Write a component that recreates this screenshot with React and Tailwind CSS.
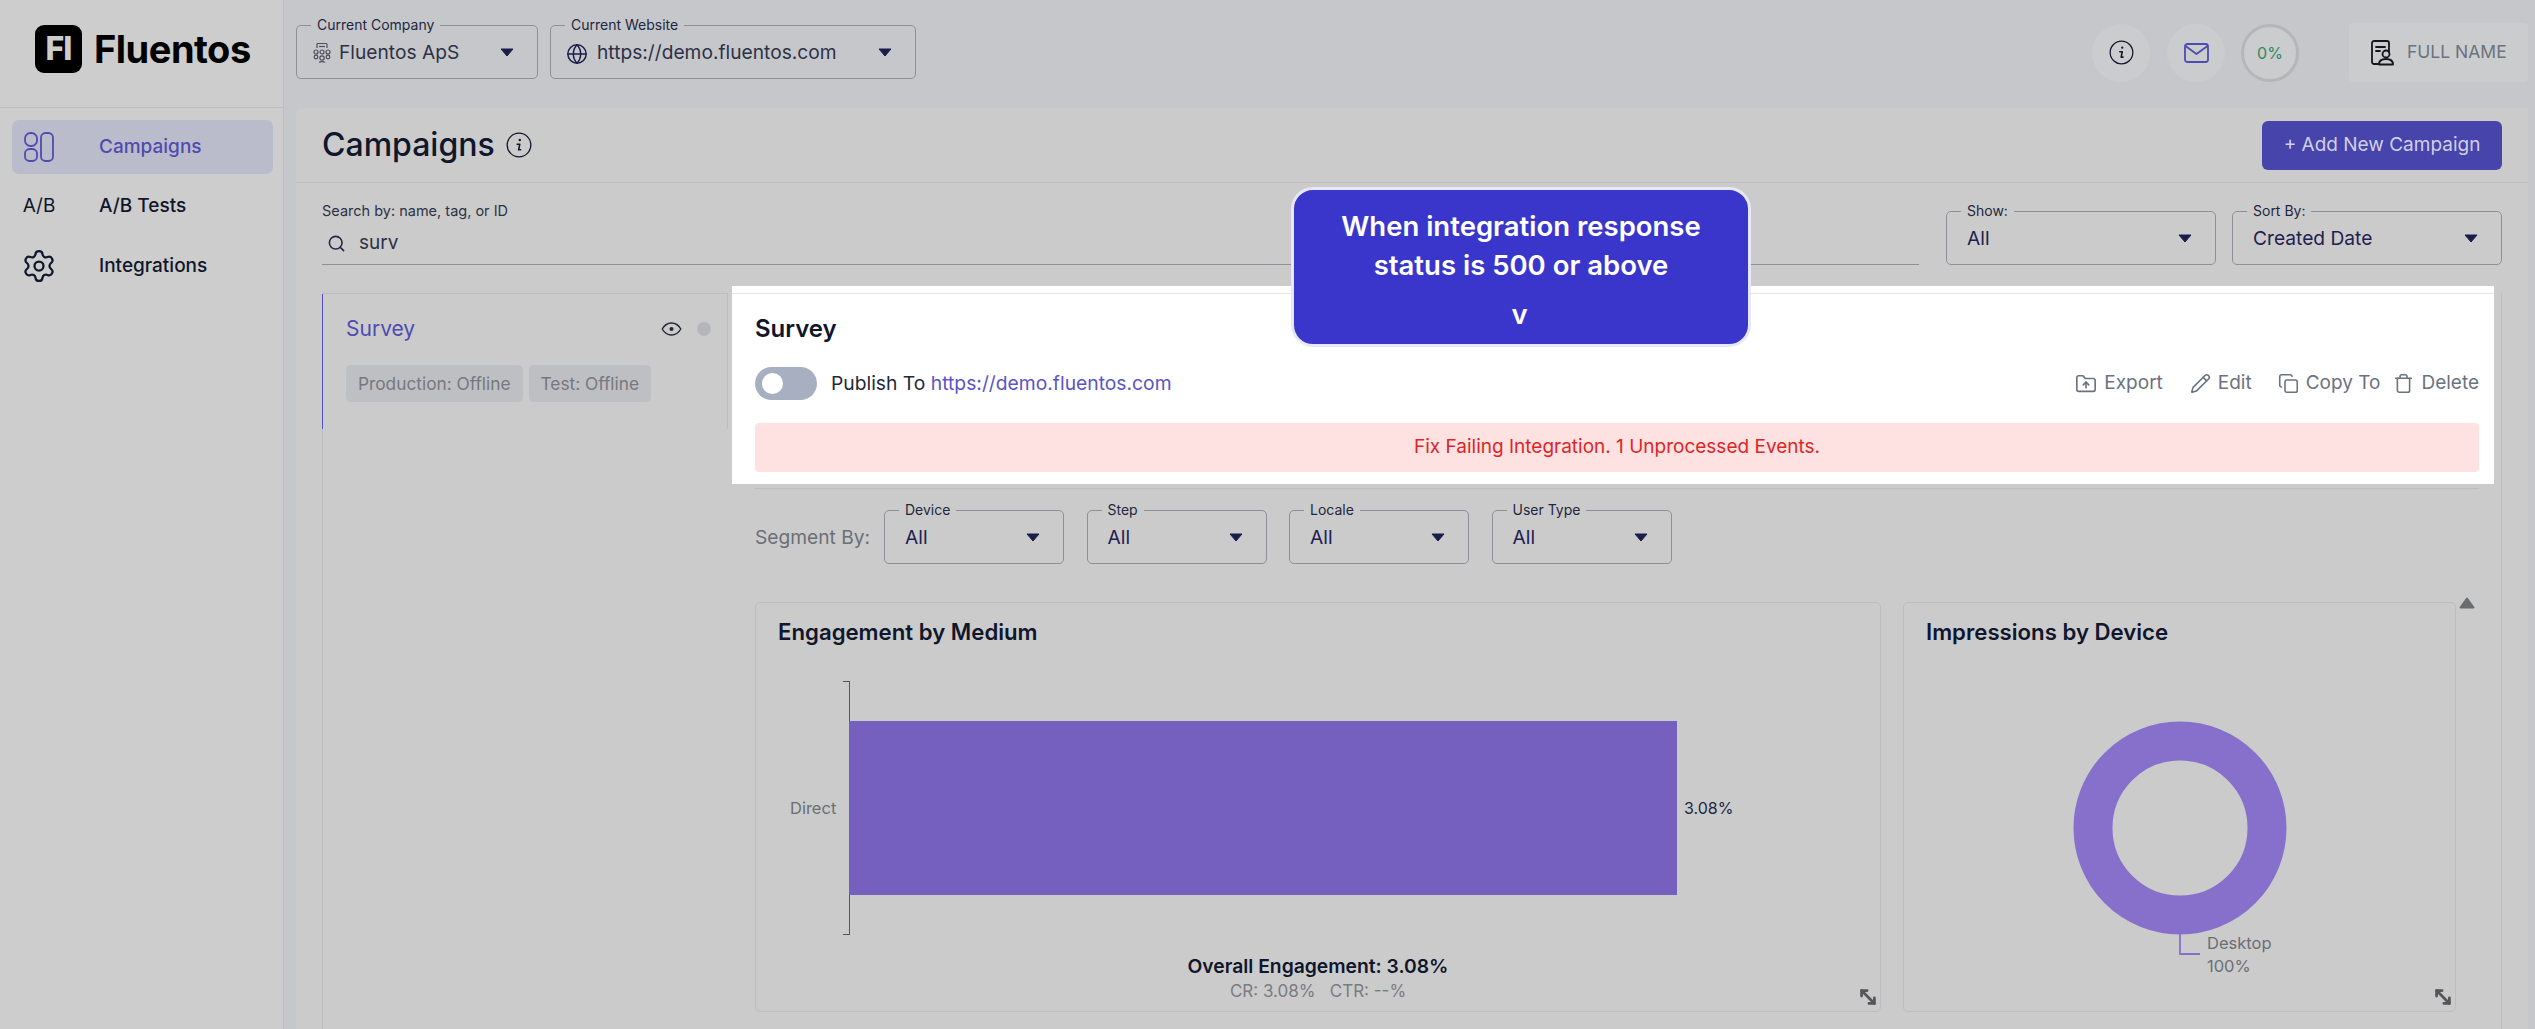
import { Copy, FolderUp, Globe, MoveDiagonal2, Pencil, Search, Settings, Trash } from 'lucide-react';

const Caret = () => (
  <svg width="14" height="9" viewBox="0 0 14 9" className="shrink-0">
    <path d="M1 1h12L7 8z" fill="#1b1c4b" stroke="#1b1c4b" strokeWidth="1" strokeLinejoin="round" />
  </svg>
);

const InfoIcon = ({ size = 26 }) => (
  <svg width={size} height={size} viewBox="0 0 26 26" fill="none">
    <circle cx="13" cy="13" r="11.8" stroke="#10162b" strokeWidth="1.3" />
    <circle cx="13.8" cy="8" r="1.2" fill="#10162b" />
    <path d="M11.2 12.2h2.6l-1.200 5.600h2" stroke="#10162b" strokeWidth="1.6" strokeLinecap="round" strokeLinejoin="round" />
  </svg>
);

const CampaignsIcon = () => (
  <svg width="30" height="30" viewBox="0 0 30 30" fill="none" stroke="#4f4bb0" strokeWidth="1.8">
    <rect x="1" y="1" width="12" height="13" rx="5.5" />
    <rect x="1" y="17" width="12" height="12" rx="4.5" />
    <rect x="17" y="1" width="12" height="28" rx="4.5" />
  </svg>
);

const CompanyIcon = () => (
  <svg width="20" height="23" viewBox="0 0 20 23" fill="none" stroke="#4b4f5c" strokeWidth="1.2">
    <path d="M5 6V2.5A1 1 0 0 1 6 1.5h8a1 1 0 0 1 1 1V6" />
    <path d="M7 4.500h6" />
    <circle cx="4" cy="10" r="2" />
    <circle cx="10" cy="10" r="2" />
    <circle cx="16" cy="10" r="2" />
    <circle cx="4" cy="15" r="1.800" />
    <circle cx="16" cy="15" r="1.800" />
    <circle cx="10" cy="16" r="2.200" />
    <path d="M7 20.500c1-1.300 5-1.300 6 0" />
  </svg>
);

const ProfileIcon = () => (
  <svg width="24" height="26" viewBox="0 0 24 26" fill="none" stroke="#14161f" strokeWidth="1.800" strokeLinecap="round" strokeLinejoin="round">
    <path d="M7 24H3a2 2 0 0 1-2-2V3a2 2 0 0 1 2-2h13a2 2 0 0 1 2 2v9" />
    <path d="M5 7h9M5 11h4" />
    <circle cx="15" cy="14" r="3.500" />
    <path d="M8 24.500c0-4 3-5.500 7-5.500s7 1.500 7 5.500z" />
  </svg>
);

const MailIcon = () => (
  <svg width="25" height="20" viewBox="0 0 25 20" fill="none" stroke="#4f4bb0" strokeWidth="1.800" strokeLinejoin="round">
    <rect x="1" y="1" width="23" height="18" rx="2.500" />
    <path d="M1.500 3l11 8 11-8" />
  </svg>
);

const EyeIcon = () => (
  <svg width="21" height="14" viewBox="0 0 21 14" fill="none">
    <path d="M1.200 7C3.500 3 6.800 1 10.500 1s7 2 9.300 6c-2.300 4-5.600 6-9.300 6S3.500 11 1.200 7z" stroke="#23252f" strokeWidth="1.400" strokeLinejoin="round" />
    <circle cx="10.500" cy="7" r="2" fill="#23252f" />
  </svg>
);

const FieldBox = ({ label, value, icon, className, labelClass, valueClass = 'text-[#1f2150]' }) => (
  <div className={`relative flex h-[54px] shrink-0 items-center rounded-[5px] border border-[#8d9097] pl-[20px] pr-[23px] ${className}`}>
    <span className={`absolute -top-[10px] left-[14px] px-[6px] text-[14px] leading-[18px] text-[#23263f] ${labelClass}`}>{label}</span>
    {icon}
    <span className={`flex-1 text-[19.2px] leading-[24px] ${valueClass}`}>{value}</span>
    <Caret />
  </div>
);

const NavItem = ({ icon, label, active }) => (
  <a className={`flex h-[54px] items-center rounded-[7px] pl-[12px] text-[19px] font-medium ${active ? 'bg-[#bbbccb] text-[#4f4bb0]' : 'text-[#10162b]'}`}>
    <span className="flex w-[30px] justify-center">{icon}</span>
    <span className="ml-[45px]">{label}</span>
  </a>
);

const ActionLink = ({ icon, label, className }) => (
  <span className={`flex items-center gap-[7px] text-[19px] text-[#6b7280] ${className}`}>
    {icon}
    {label}
  </span>
);

const ChartCard = ({ title, className, children }) => (
  <section className={`relative h-[410px] rounded-[5px] border border-[#bcbdc0] pt-[15px] ${className}`}>
    <h3 className="pl-[22px] text-[22.2px] font-semibold leading-[28px] text-[#10162b]">{title}</h3>
    {children}
    <MoveDiagonal2 size={22} strokeWidth={3} className="absolute bottom-[3px] right-[1px] text-[#55565a]" />
  </section>
);

const App = () => {
  return (
    <div className="relative flex h-[1029px] w-[2535px] overflow-hidden bg-[#c5c7cb] font-['Inter',sans-serif]">
      <aside className="w-[284px] shrink-0 border-r border-[#bcbdbf] bg-[#cdcdcd]">
        <div className="flex h-[108px] items-start gap-[12px] border-b border-[#bcbdbf] pl-[35px] pt-[25px]">
          <div className="flex h-[48px] w-[47px] items-center justify-center rounded-[9px] bg-black text-[32px] font-extrabold tracking-[-1px] text-[#cdcdcd]">FI</div>
          <span className="text-[38px] font-bold leading-[48px] tracking-[-0.5px] text-black">Fluentos</span>
        </div>
        <nav className="flex flex-col gap-[5.5px] pl-[12px] pr-[10px] pt-[12px]">
          <NavItem active label="Campaigns" icon={<CampaignsIcon />} />
          <NavItem label="A/B Tests" icon={<span className="text-[19px] font-normal">A/B</span>} />
          <NavItem label="Integrations" icon={<Settings size={36} strokeWidth={1.5} className="shrink-0 text-[#10162b]" />} />
        </nav>
      </aside>

      <div className="flex min-w-0 flex-1 flex-col">
        <header className="flex h-[108px] shrink-0 items-start pl-[12px] pr-[7px] pt-[25px]">
          <FieldBox className="w-[242px]" labelClass="bg-[#c5c7cb]" label="Current Company" value="Fluentos ApS" valueClass="text-[#2e3145]" icon={<span className="mr-[7px] -ml-[5px] mt-[3px]"><CompanyIcon /></span>} />
          <FieldBox className="ml-[12px] w-[366px]" labelClass="bg-[#c5c7cb]" label="Current Website" value="https://demo.fluentos.com" valueClass="text-[#2e3145]" icon={<Globe size={22} strokeWidth={1.6} className="-ml-[5px] mr-[9px] mt-[3px] text-[#1b1c4b]" />} />
          <div className="-mt-[2px] ml-auto flex items-center">
            <span className="flex h-[58px] w-[58px] items-center justify-center rounded-full bg-[#cbcccd]"><InfoIcon size={25} /></span>
            <span className="ml-[17px] flex h-[58px] w-[58px] items-center justify-center rounded-full bg-[#cbcccd]"><MailIcon /></span>
            <span className="ml-[16px] flex h-[58px] w-[58px] items-center justify-center rounded-full border-[3px] border-[#b4b6b8] bg-[#cbcccd] text-[16px] text-[#2f8a5f]">0%</span>
            <div className="ml-[50px] flex h-[59px] w-[179px] items-center rounded-[4px] bg-[#cbcccd] pl-[22px]">
              <ProfileIcon />
              <span className="ml-[12px] text-[17.5px] text-[#6b7280]">FULL NAME</span>
            </div>
          </div>
        </header>

        <main className="ml-[12px] mr-[7px] flex-1 rounded-tl-[6px] bg-[#cbcbcb] px-[26px]">
          <div className="-mx-[26px] flex h-[75px] items-center justify-between border-b border-[#bdbec0] px-[26px]">
            <div className="flex items-center gap-[11px]">
              <h1 className="text-[32px] font-medium leading-[40px] text-[#10162b]">Campaigns</h1>
              <InfoIcon />
            </div>
            <button className="h-[49px] w-[240px] rounded-[6px] bg-[#4744ab] text-[19px] text-[#cfd0e6]">+ Add New Campaign</button>
          </div>

          <div className="mt-[28px] flex h-[54px] items-stretch">
            <div className="flex flex-1 flex-col border-b border-[#8d9097]">
              <label className="-mt-[9px] text-[14.5px] leading-[18px] text-[#2e3145]">Search by: name, tag, or ID</label>
              <div className="mt-[11px] flex items-center pl-[5px]">
                <Search size={19} strokeWidth={2} className="text-[#23263f]" />
                <span className="ml-[13px] text-[19px] leading-[24px] text-[#2e3145]">surv</span>
              </div>
            </div>
            <FieldBox className="ml-[27px] w-[270px]" labelClass="bg-[#cbcbcb]" label="Show:" value="All" />
            <FieldBox className="ml-[16px] w-[270px]" labelClass="bg-[#cbcbcb]" label="Sort By:" value="Created Date" />
          </div>

          <div className="mt-[28px] flex h-[800px] border-l border-r border-[#bcbdc0]">
            <div className="w-[405px] shrink-0 border-t border-[#bcbdc0]">
              <div className="-ml-px h-[135px] border-l border-r border-l-[#5550c0] border-r-[#bcbdc0] pl-[23px] pr-[16px] pt-[22px]">
                <div className="flex items-center justify-between">
                  <span className="text-[21px] leading-[26px] text-[#4f4bb0]">Survey</span>
                  <div className="flex items-center gap-[15px]">
                    <EyeIcon />
                    <span className="h-[14px] w-[14px] rounded-full bg-[#b5b6b9]" />
                  </div>
                </div>
                <div className="mt-[23px] flex gap-[6px]">
                  <span className="flex h-[37px] items-center rounded-[5px] bg-[#bebfc3] px-[12px] text-[17.3px] text-[#76787d]">Production: Offline</span>
                  <span className="flex h-[37px] items-center rounded-[5px] bg-[#bebfc3] px-[12px] text-[17.3px] text-[#76787d]">Test: Offline</span>
                </div>
              </div>
            </div>

            <div className="min-w-0 flex-1">
              <div className="-mt-[7px] ml-[4px] mr-[7px] h-[198px] bg-white pt-[7px]">
                <div className="h-[191px] border-t border-[#e5e7eb] pl-[23px] pr-[15px] pt-[20px]">
                  <h2 className="text-[24px] font-semibold leading-[30px] text-[#10162b]">Survey</h2>
                  <div className="mt-[23px] flex h-[33px] items-center">
                    <span className="flex h-[33px] w-[62px] items-center rounded-full bg-[#a8afc0] pl-[7px]">
                      <span className="h-[21px] w-[21px] rounded-full bg-white" />
                    </span>
                    <span className="ml-[14px] text-[19.3px] text-[#1f2937]">Publish To <a className="text-[#5b54c4]">https://demo.fluentos.com</a></span>
                    <div className="ml-auto flex items-center">
                      <ActionLink label="Export" icon={<FolderUp size={22} strokeWidth={1.8} />} />
                      <ActionLink className="ml-[27px]" label="Edit" icon={<Pencil size={21} strokeWidth={1.8} />} />
                      <ActionLink className="ml-[26px]" label="Copy To" icon={<Copy size={21} strokeWidth={1.8} />} />
                      <ActionLink className="ml-[13px]" label="Delete" icon={<Trash size={21} strokeWidth={1.8} />} />
                    </div>
                  </div>
                  <div className="mt-[23px] flex h-[49px] items-center justify-center rounded-[4px] bg-[#fee2e2] text-[19px] text-[#dc2626]">Fix Failing Integration. 1 Unprocessed Events.</div>
                </div>
              </div>

              <div className="relative ml-[27px] mr-[22px] mt-[4px] border-t border-[#bcbdc0] pt-[21px]">
                <div className="flex items-center">
                  <span className="w-[129px] text-[19.2px] text-[#6b6e75]">Segment By:</span>
                  <div className="flex gap-[22.5px]">
                    <FieldBox className="w-[180px]" labelClass="bg-[#cbcbcb]" label="Device" value="All" />
                    <FieldBox className="w-[180px]" labelClass="bg-[#cbcbcb]" label="Step" value="All" />
                    <FieldBox className="w-[180px]" labelClass="bg-[#cbcbcb]" label="Locale" value="All" />
                    <FieldBox className="w-[180px]" labelClass="bg-[#cbcbcb]" label="User Type" value="All" />
                  </div>
                </div>

                <div className="mt-[38px] flex gap-[22px]">
                  <ChartCard title="Engagement by Medium" className="w-[1126px]">
                    <div className="mt-[35px] flex h-[254px] items-center">
                      <span className="ml-[34px] w-[50px] text-[16.5px] text-[#6b6e75]">Direct</span>
                      <div className="-mr-px ml-[3px] flex h-full w-[7px] items-center border-y border-r border-[#55565a]" />
                      <div className="h-[174px] w-[828px] bg-[#7560c0]" />
                      <span className="ml-[7px] text-[16px] text-[#23263f]">3.08%</span>
                    </div>
                    <div className="mt-[18px] text-center">
                      <p className="text-[19.3px] font-semibold leading-[26px] text-[#10162b]">Overall Engagement: 3.08%</p>
                      <p className="text-[17px] leading-[24px] text-[#7a7c82]">CR: 3.08% &nbsp; CTR: --%</p>
                    </div>
                  </ChartCard>

                  <ChartCard title="Impressions by Device" className="w-[553px]">
                    <svg width="220" height="240" viewBox="0 0 220 240" fill="none" className="absolute left-[169px] top-[118px]">
                      <circle cx="107" cy="107" r="87" stroke="#8670cb" strokeWidth="39" />
                      <path d="M107 213v20h20" stroke="#8670cb" strokeWidth="1.800" />
                    </svg>
                    <div className="absolute left-[303px] top-[329px] text-[16.5px] leading-[23px] text-[#6b6e75]">
                      <p>Desktop</p>
                      <p>100%</p>
                    </div>
                  </ChartCard>
                </div>

                <svg width="16" height="12" viewBox="0 0 16 12" className="absolute right-[4px] top-[108px]">
                  <path d="M8 1.500L14.500 10.500H1.500z" fill="#6b6c70" stroke="#6b6c70" strokeWidth="2" strokeLinejoin="round" />
                </svg>
              </div>
            </div>
          </div>
        </main>
      </div>

      <div className="absolute left-[1291px] top-[187px] flex h-[160px] w-[460px] flex-col items-center rounded-[22px] border-[3px] border-[#e6e7f7] bg-[#3a36cc] pt-[17px] text-center text-[27.5px] font-semibold leading-[39px] text-white">
        <p>When integration response</p>
        <p>status is 500 or above</p>
        <p className="mr-[3px] mt-[10px]">v</p>
      </div>
    </div>
  );
};

export default App;
